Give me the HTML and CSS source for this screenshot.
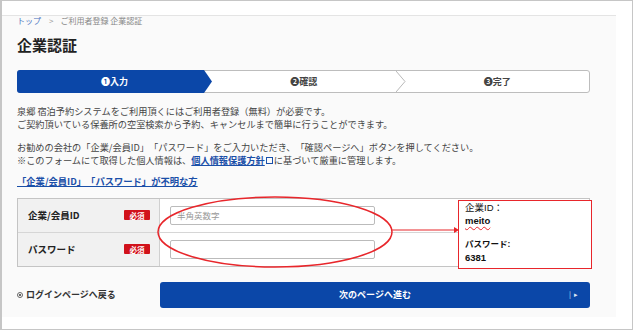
FILE: index.html
```html
<!DOCTYPE html>
<html lang="ja">
<head>
    <meta charset="UTF-8">
    <meta name="viewport" content="width=device-width, initial-scale=1.0">
    <title>企業認証</title>
    <link rel="stylesheet" href="styles.css">
</head>
<body>
    <div class="screen">
        <div class="page">
            <div class="topbar"></div>
            <div class="content">
                <div class="breadcrumb">
                    <a href="#">トップ</a><span class="sep">&gt;</span><span>ご利用者登録 企業認証</span>
                </div>
                <h1>企業認証</h1>

                <div class="steps">
                    <div class="step step-active">❶入力</div>
                    <div class="step">❷確認</div>
                    <svg class="chevron" width="10" height="21" viewBox="0 0 10 21">
                        <polyline points="0,0 9,10.5 0,21" fill="none" stroke="#b8b8b8" stroke-width="1"/>
                    </svg>
                    <div class="step">❸完了</div>
                </div>

                <p class="intro">
                    泉郷 宿泊予約システムをご利用頂くにはご利用者登録（無料）が必要です。<br>
                    ご契約頂いている保養所の空室検索から予約、キャンセルまで簡単に行うことができます。
                </p>
                <p class="intro">
                    お勧めの会社の「企業/会員ID」「パスワード」をご入力いただき、「確認ページへ」ボタンを押してください。<br>
                    ※このフォームにて取得した個人情報は、<a class="policy" href="#">個人情報保護方針</a><span class="ext"></span>に基づいて厳重に管理します。
                </p>

                <a class="forgot" href="#">「企業/会員ID」「パスワード」が不明な方</a>

                <div class="form-area">
                    <div class="form-table">
                        <div class="row">
                            <div class="label">企業/会員ID<span class="badge">必須</span></div>
                            <div class="field"><input type="text" placeholder="半角英数字"></div>
                        </div>
                        <div class="row">
                            <div class="label">パスワード<span class="badge">必須</span></div>
                            <div class="field"><input type="password"></div>
                        </div>
                    </div>

                    <!-- annotation drawn over the form -->
                    <svg class="markup" width="575" height="76" viewBox="0 0 575 76">
                        <ellipse cx="258" cy="36" rx="117" ry="35" fill="none" stroke="#e8262b" stroke-width="1.5"/>
                        <line x1="375" y1="34" x2="437" y2="34" stroke="#e8262b" stroke-width="1.2"/>
                        <polygon points="437,31 442,34 437,37" fill="#e8262b"/>
                    </svg>
                    <div class="note">
                        <div>企業ID：</div>
                        <div class="note-strong meito">meito</div>
                        <div class="note-strong note-gap">パスワード:</div>
                        <div class="note-strong">6381</div>
                    </div>
                </div>

                <div class="actions">
                    <a class="back" href="#"><span class="back-icon"></span>ログインページへ戻る</a>
                    <button type="button" class="next">
                        次のページへ進む
                        <span class="next-arrow">|&nbsp;&nbsp;▸</span>
                    </button>
                </div>
            </div>
        </div>
    </div>
</body>
</html>
```

FILE: styles.css
```css
body {
    margin: 0;
    padding: 0;
    font-family: "Noto Sans CJK JP", "Liberation Sans", sans-serif;
    color: #333;
    background-color: #fff;
    text-spacing-trim: space-all;
}
.screen {
    width: 633px;
    height: 330px;
    box-sizing: border-box;
    border: 1px solid #c6c6c6;
    border-left-width: 2px;
    background-color: #fff;
    overflow: hidden;
}
.page {
    width: 614px;
    height: 316px;
    background-color: #fafafa;
}
.topbar {
    height: 14px;
    background-color: #fff;
    border-bottom: 1px solid #e4e4e4;
}
.content {
    padding-left: 15px;
    width: 573px;
}
.breadcrumb {
    font-size: 8px;
    line-height: 10px;
    color: #888;
    margin-top: 0;
}
.breadcrumb a {
    color: #4a72c0;
    text-decoration: none;
}
.breadcrumb .sep {
    margin: 0 7px 0 8px;
    color: #999;
}
h1 {
    font-size: 15px;
    line-height: 20px;
    margin: 9px 0 0;
    color: #222;
}
.steps {
    display: flex;
    height: 23px;
    box-sizing: border-box;
    margin-top: 15px;
    border: 1px solid #bdbdbd;
    border-radius: 3px;
    background-color: #fff;
    font-size: 9px;
    font-weight: bold;
}
.step {
    display: flex;
    align-items: center;
    justify-content: center;
    color: #444;
    flex: 1;
}
.step-active {
    flex: 0 0 195px;
    margin: -1px 0 -1px -1px;
    background-color: #0b47a8;
    color: #fff;
    border-radius: 3px 0 0 3px;
    clip-path: polygon(0 0, calc(100% - 8px) 0, 100% 50%, calc(100% - 8px) 100%, 0 100%);
}
.chevron {
    flex: 0 0 10px;
}
.intro {
    font-size: 9.2px;
    line-height: 13.4px;
    margin: 12px 0 0;
    color: #444;
    white-space: nowrap;
}
.intro + .intro {
    margin-top: 9px;
}
.policy {
    color: #1a4fa8;
    font-weight: bold;
    text-decoration: underline;
}
.ext {
    display: inline-block;
    width: 5px;
    height: 5px;
    border: 1px solid #1a4fa8;
    margin: 0 1px;
}
.forgot {
    display: block;
    width: fit-content;
    margin-top: 7px;
    font-size: 9.3px;
    line-height: 12px;
    font-weight: bold;
    color: #1a4fa8;
    text-decoration: underline;
}
.form-area {
    position: relative;
    margin-top: 11px;
}
.form-table {
    border: 1px solid #c4c4c4;
    background-color: #fff;
}
.row {
    display: grid;
    grid-template-columns: 142px 1fr;
    height: 33px;
}
.row + .row {
    border-top: 1px solid #d6d6d6;
}
.label {
    display: flex;
    align-items: center;
    justify-content: space-between;
    padding: 0 9px 0 10px;
    background-color: #f1f1f1;
    border-right: 1px solid #d0d0d0;
    font-size: 9.5px;
    font-weight: bold;
    color: #222;
}
.badge {
    display: inline-flex;
    align-items: center;
    justify-content: center;
    width: 26px;
    height: 10px;
    background-color: #d1121b;
    color: #fff;
    font-size: 7.5px;
    border-radius: 1px;
}
.field {
    display: flex;
    align-items: center;
    padding-left: 10px;
}
.field input {
    width: 205px;
    height: 19px;
    box-sizing: border-box;
    border: 1px solid #bbb;
    border-radius: 2px;
    padding: 0 6px;
    font-family: inherit;
    font-size: 8.5px;
    background-color: #fff;
}
.field input::placeholder {
    color: #999;
}
.markup {
    position: absolute;
    left: 0;
    top: -2px;
    pointer-events: none;
}
.note {
    position: absolute;
    left: 441px;
    top: 2px;
    width: 134px;
    height: 69px;
    box-sizing: border-box;
    border: 1px solid #e8262b;
    background-color: #fff;
    padding: 0 6px;
    font-family: "Liberation Sans", "Noto Sans CJK JP", sans-serif;
    font-size: 9.5px;
    line-height: 13px;
    color: #111;
}
.note-strong {
    font-weight: bold;
}
.meito {
    text-decoration: underline wavy #e8262b;
    text-decoration-thickness: 1px;
    text-underline-offset: 2px;
}
.note-gap {
    margin-top: 11px;
    font-size: 8.5px;
}
.actions {
    display: flex;
    align-items: center;
    margin-top: 15px;
}
.back {
    display: flex;
    align-items: center;
    width: 143px;
    font-size: 9px;
    font-weight: bold;
    color: #333;
    text-decoration: none;
}
.back-icon {
    display: inline-block;
    width: 4px;
    height: 4px;
    border: 1px solid #666;
    border-radius: 50%;
    margin-right: 3px;
    background: radial-gradient(circle, #666 40%, transparent 45%);
}
.next {
    position: relative;
    flex: 1;
    height: 26px;
    border: none;
    border-radius: 3px;
    background-color: #0b47a8;
    color: #fff;
    font-family: inherit;
    font-size: 9px;
    font-weight: bold;
    cursor: pointer;
}
.next-arrow {
    position: absolute;
    right: 12px;
    top: 7px;
    font-size: 7px;
    font-weight: normal;
    color: #dfe6f3;
}
```
